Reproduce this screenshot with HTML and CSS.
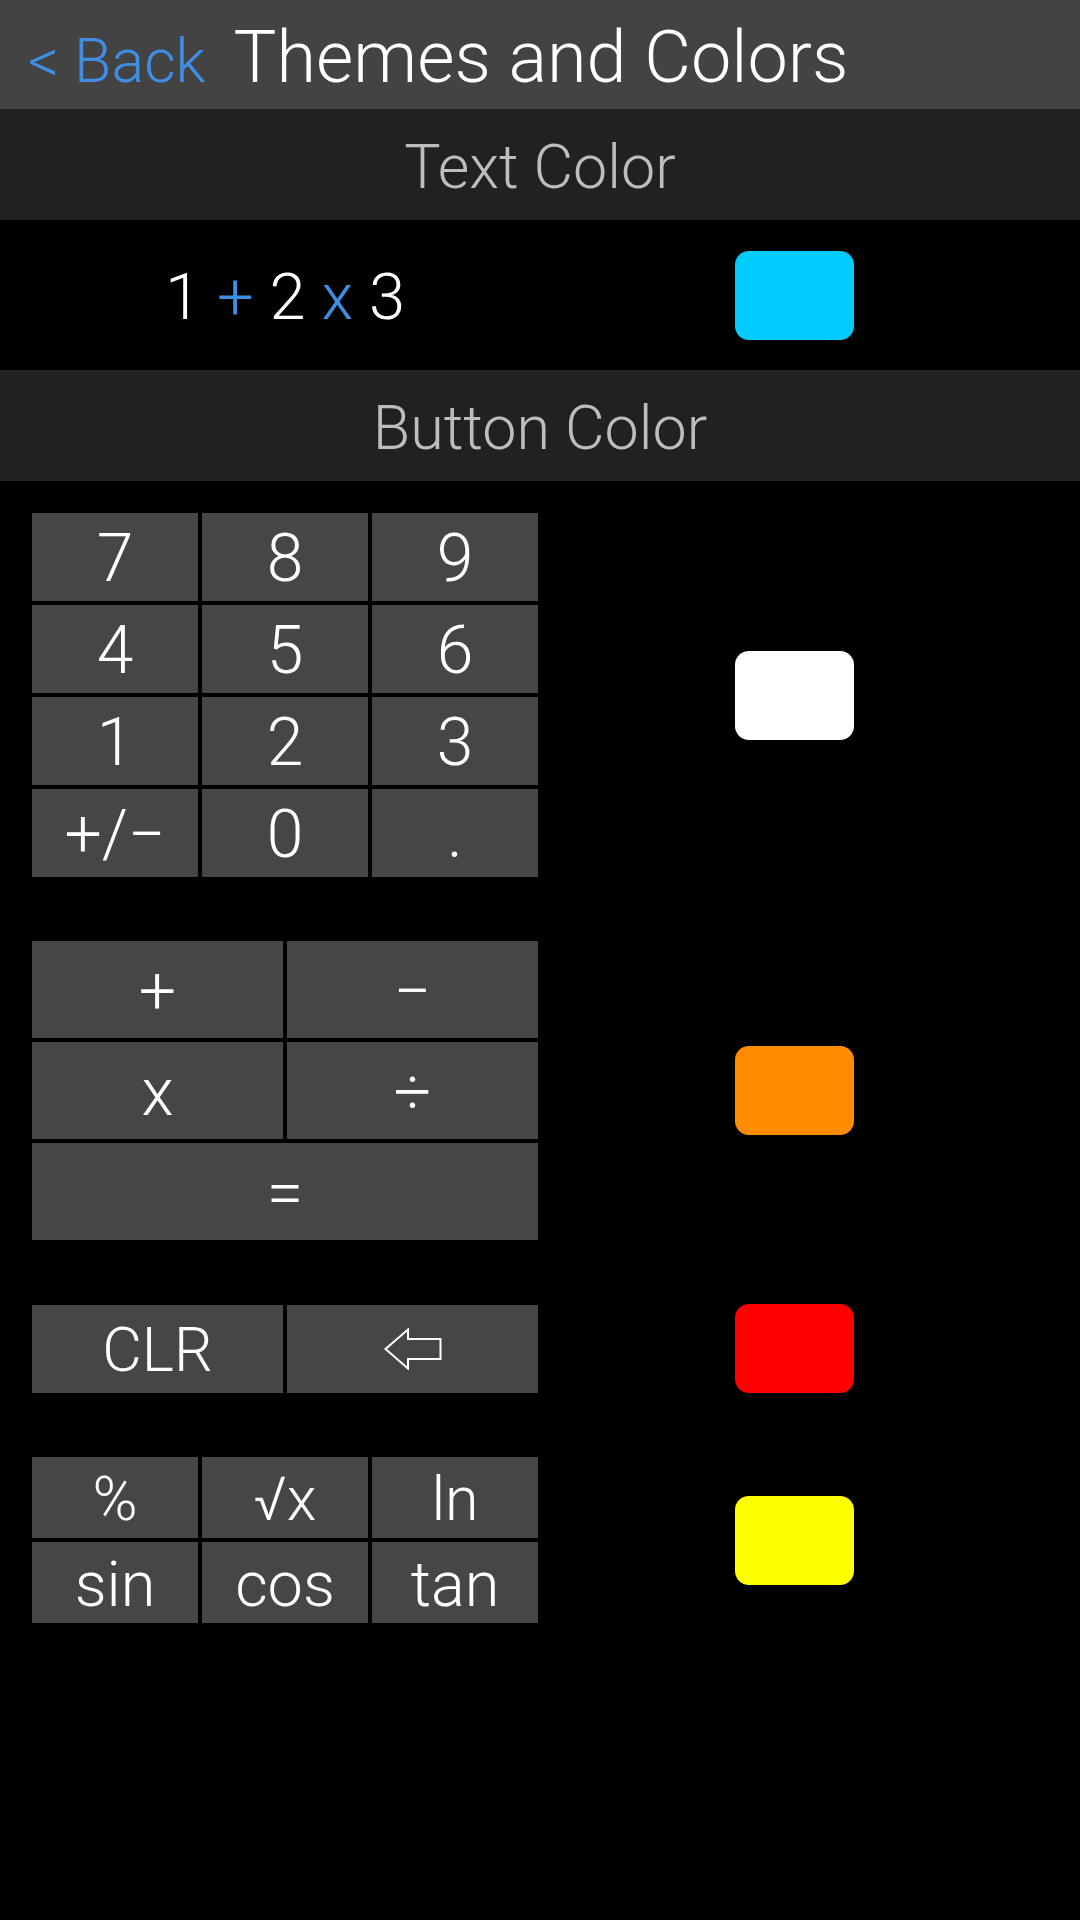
FILE: index.html
```html
<!DOCTYPE html>
<html>
<head>
    <title>Themes and Colors</title>
    <link rel="stylesheet" href="styles.css">
</head>
<body>
    <div class="header">
        <span class="back">&lt; Back</span>
        <span class="title">Themes and Colors</span>
    </div>

    <div class="band">Text Color</div>

    <div class="row text-row">
        <div class="expr">1 <span class="op">+</span> 2 <span class="op">x</span> 3</div>
        <div class="swatch-cell"><div class="swatch cyan"></div></div>
    </div>

    <div class="band">Button Color</div>

    <div class="buttons">
        <!-- numero -->
        <div class="row">
            <div class="keys cols3 numpad">
                <div class="key">7</div><div class="key">8</div><div class="key">9</div>
                <div class="key">4</div><div class="key">5</div><div class="key">6</div>
                <div class="key">1</div><div class="key">2</div><div class="key">3</div>
                <div class="key">+/&minus;</div><div class="key">0</div><div class="key">.</div>
            </div>
            <div class="swatch-cell"><div class="swatch white"></div></div>
        </div>

        <!-- operadores -->
        <div class="row">
            <div class="keys cols2 ops">
                <div class="key">+</div><div class="key">&minus;</div>
                <div class="key">x</div><div class="key">&divide;</div>
                <div class="key wide">=</div>
            </div>
            <div class="swatch-cell"><div class="swatch orange"></div></div>
        </div>

        <!-- borrar -->
        <div class="row">
            <div class="keys cols2 clear">
                <div class="key">CLR</div>
                <div class="key">
                    <svg width="58" height="42" viewBox="0 0 58 42">
                        <polygon points="1.5,21 24,1.5 24,11 56.5,11 56.5,31 24,31 24,40.5" fill="none" stroke="#fff" stroke-width="2" stroke-linejoin="miter"/>
                    </svg>
                </div>
            </div>
            <div class="swatch-cell"><div class="swatch red"></div></div>
        </div>

        <!-- funciones -->
        <div class="row">
            <div class="keys cols3 funcs">
                <div class="key small">%</div><div class="key small">&radic;x</div><div class="key small">ln</div>
                <div class="key">sin</div><div class="key">cos</div><div class="key">tan</div>
            </div>
            <div class="swatch-cell"><div class="swatch yellow"></div></div>
        </div>
    </div>
</body>
</html>
```

FILE: styles.css
```css
body {
    font-family: Roboto, 'Liberation Sans', sans-serif;
    font-weight: 300;
    background: #000000;
    color: #ffffff;
    margin: 0;
    width: 1080px;
    height: 1920px;
    overflow: hidden;
}
.header {
    height: 109px;
    box-sizing: border-box;
    background: #434343;
    display: flex;
    align-items: baseline;
    gap: 28px;
    padding: 22px 0 0 28px;
    line-height: 1;
}
.back {
    color: #3f8ee4;
    font-size: 61px;
}
.title {
    font-size: 72px;
    color: #ffffff;
}
.band {
    height: 111px;
    box-sizing: border-box;
    padding-top: 5px;
    background: #212121;
    color: #bdbdbd;
    font-size: 61px;
    line-height: 1;
    display: flex;
    justify-content: center;
    align-items: center;
}
.row {
    display: grid;
    grid-template-columns: 506px 1fr;
    padding-left: 32px;
    align-items: center;
}
.text-row {
    height: 150px;
}
.expr {
    text-align: center;
    font-size: 65px;
    line-height: 1;
    padding-top: 4px;
}
.op {
    color: #3f8ee4;
}
.swatch-cell {
    padding-left: 197px;
    display: flex;
}
.swatch {
    width: 119px;
    height: 89px;
    border-radius: 14px;
}
.cyan { background: #00ccff; }
.white { background: #ffffff; }
.orange { background: #ff8c00; }
.red { background: #ff0000; }
.yellow { background: #ffff00; }

.buttons {
    padding-top: 32px;
    display: flex;
    flex-direction: column;
    gap: 64px;
}
.keys {
    display: grid;
    gap: 4px;
}
.cols3 { grid-template-columns: repeat(3, 1fr); }
.cols2 { grid-template-columns: repeat(2, 1fr); }
.key {
    background: #464646;
    color: #ffffff;
    font-size: 66px;
    line-height: 1;
    display: flex;
    justify-content: center;
    align-items: center;
    padding-top: 4px;
    box-sizing: border-box;
}
.numpad .key { height: 88px; }
.ops .key { height: 97px; }
.ops .wide { grid-column: span 2; }
.clear .key { height: 88px; font-size: 61px; }
.clear svg { margin-top: -4px; }
.funcs .key { height: 81px; font-size: 63px; }
.funcs .small { font-size: 61px; }
```
